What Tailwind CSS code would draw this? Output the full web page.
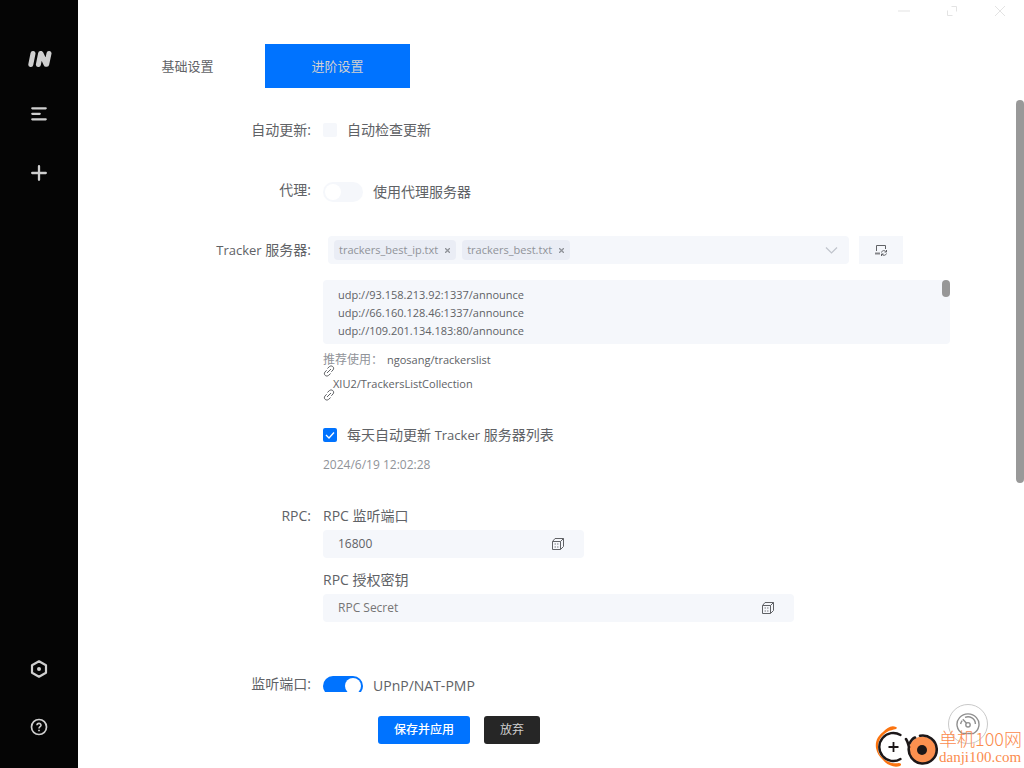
<!DOCTYPE html>
<html lang="zh-CN">
<head>
<meta charset="utf-8">
<meta name="viewport" content="width=device-width, initial-scale=1">
<title>进阶设置</title>
<script src="https://cdn.jsdelivr.net/npm/@tailwindcss/browser@4"></script>
</head>
<body class="bg-white font-['Open_Sans','Noto_Sans_CJK_SC',sans-serif] text-sm text-[#606266]">
<div class="flex h-screen overflow-hidden">
  <aside class="flex w-[78px] shrink-0 flex-col items-center justify-between bg-[#050505] pt-12 pb-7 text-[#cfcfcf]">
    <nav class="flex flex-col items-center gap-9" aria-label="任务">
      <a href="#" aria-label="首页" class="block pl-[2px]">
        <svg class="h-[22px] w-6" viewBox="0 0 24 22" fill="none" stroke="currentColor" stroke-width="5" stroke-linecap="round" stroke-linejoin="round"><path d="M5 5.500 2.800 16.500M12.600 5.500 10.400 16.500M13 5.500 18 16.200M21 5.500 18.700 16.300" /></svg>
      </a>
      <button type="button" aria-label="任务列表"><svg class="block size-4" viewBox="0 0 16 16" fill="none" stroke="currentColor" stroke-width="2.300" stroke-linecap="round"><path d="M1.300 2.300h13.400M1.300 7.800h7.400M1.300 13.300h13.400"/></svg></button>
      <button type="button" aria-label="新建任务" class="pt-[7px]"><svg class="block size-4" viewBox="0 0 16 16" fill="none" stroke="currentColor" stroke-width="2.300" stroke-linecap="round"><path d="M8 1.200v13.600M1.200 8h13.600"/></svg></button>
    </nav>
    <nav class="flex flex-col items-center gap-10" aria-label="设置与帮助">
      <button type="button" aria-label="设置"><svg class="block size-[18px]" viewBox="0 0 18 18" fill="none" stroke="currentColor" stroke-width="2.200"><path d="M9 1.300 16 5.200v7.600L9 16.700 2 12.800V5.200z" stroke-linejoin="round"/><circle cx="9" cy="9" r="2" fill="currentColor" stroke="none"/></svg></button>
      <button type="button" aria-label="帮助" class="pb-1"><svg class="block size-[18px]" viewBox="0 0 18 18" fill="none" stroke="currentColor" stroke-width="1.700"><circle cx="9" cy="9" r="7.500"/><path d="M7 7.300c0-2.600 4-2.600 4-.1C11 8.700 9 8.700 9 10.500" stroke-width="1.600"/><path d="M9 11.700v1.500" stroke-width="1.700"/></svg></button>
    </nav>
  </aside>

  <main class="relative flex min-w-0 flex-1 flex-col">
    <div class="absolute top-0 right-0 flex h-[22px] text-[#e3e3e3]">
      <button type="button" aria-label="最小化" class="grid w-12 place-items-center"><svg class="size-3" viewBox="0 0 12 12" stroke="currentColor"><path d="M0 6h12"/></svg></button>
      <button type="button" aria-label="最大化" class="grid w-12 place-items-center"><svg class="size-3" viewBox="0 0 12 12" fill="none" stroke="currentColor"><path d="M5.500 1.500h5v5M1.500 5.500v5h5"/></svg></button>
      <button type="button" aria-label="关闭" class="grid w-12 place-items-center"><svg class="size-3" viewBox="0 0 12 12" fill="none" stroke="currentColor"><path d="m1 1 10 10M11 1 1 11"/></svg></button>
    </div>

    <nav class="flex gap-[5px] pt-11 pl-[37px] text-[13px]" aria-label="设置分类">
      <a href="#" class="flex h-11 w-[145px] items-center justify-center">基础设置</a>
      <a href="#" aria-current="page" class="flex h-11 w-[145px] items-center justify-center bg-[#0073ff] text-[#d0d0d0]">进阶设置</a>
    </nav>

    <form id="settings" class="flex min-h-0 flex-1 flex-col gap-8 overflow-hidden pt-7 pr-[74px]">
      <div class="grid shrink-0 grid-cols-[233px_1fr] gap-x-3 leading-7">
        <div class="text-right">自动更新:</div>
        <label class="flex items-center gap-[10px]"><input type="checkbox" class="size-[14px] appearance-none rounded-xs bg-[#f5f7fb]">自动检查更新</label>
      </div>

      <div class="grid shrink-0 grid-cols-[233px_1fr] gap-x-3 leading-7">
        <div class="text-right">代理:</div>
        <label class="flex items-center gap-[10px] pt-1 leading-6"><input type="checkbox" role="switch" class="h-5 w-10 appearance-none rounded-full bg-[#f5f7fb] before:m-0.5 before:block before:size-4 before:rounded-full before:bg-white">使用代理服务器</label>
      </div>

      <div class="grid shrink-0 grid-cols-[233px_1fr] gap-x-3 leading-7">
        <label for="sources" class="text-right"><span class="text-[13px]">Tracker</span> 服务器:</label>
        <div>
          <div class="flex gap-[10px] pr-[47px] pl-[5px]">
            <div class="flex h-7 min-w-0 flex-1 items-center gap-[6px] rounded bg-[#f5f7fb] px-[6px] text-[11px] text-[#909399]">
              <span class="flex h-5 items-center gap-[5px] rounded bg-[#eaedf5] px-[5px]">trackers_best_ip.txt<button type="button" aria-label="移除 trackers_best_ip.txt" class="grid w-2 place-items-center"><svg class="size-[5px]" viewBox="0 0 5 5" stroke="currentColor" stroke-width="1.300"><path d="m0 0 5 5M5 0 0 5"/></svg></button></span>
              <span class="flex h-5 items-center gap-[5px] rounded bg-[#eaedf5] px-[5px]">trackers_best.txt<button type="button" aria-label="移除 trackers_best.txt" class="grid w-2 place-items-center"><svg class="size-[5px]" viewBox="0 0 5 5" stroke="currentColor" stroke-width="1.300"><path d="m0 0 5 5M5 0 0 5"/></svg></button></span>
              <input id="sources" type="text" role="combobox" aria-expanded="false" class="min-w-0 flex-1 bg-transparent outline-none">
              <button type="button" aria-label="展开" class="px-[5px]"><svg class="block h-3 w-[13px]" viewBox="0 0 13 12" fill="none" stroke="#c0c4cc" stroke-width="1.200"><path d="m1 3.500 5.500 5.500L12 3.500"/></svg></button>
            </div>
            <button type="button" aria-label="同步 Tracker" class="grid h-7 w-11 place-items-center bg-[#f5f7fb]"><svg class="size-3" viewBox="0 0 12 12" fill="none" stroke="currentColor"><path d="M1.500 7V1.500h9V5"/><path d="M0 9.500h5" stroke-width="2" stroke-opacity=".75"/><path d="M6.500 8.500c.5-2.300 3.400-2.500 4.500-.8M11.500 6v2h-2M11.500 9.500c-.7 2.200-3.500 2.300-4.500.8M6.500 12v-2h2"/></svg></button>
          </div>
          <div class="relative mt-4 h-16">
            <textarea aria-label="Tracker 服务器列表" class="block size-full resize-none overflow-hidden rounded bg-[#f5f7fb] px-[15px] py-[6px] text-[11px] leading-[18px] outline-none">udp://93.158.213.92:1337/announce
udp://66.160.128.46:1337/announce
udp://109.201.134.183:80/announce</textarea>
            <div class="absolute top-0 right-0 h-[17px] w-2 rounded-full bg-[#979797]"></div>
          </div>
          <div class="pt-1 text-[11px] leading-6">
            <div class="relative flex gap-1"><span class="text-xs leading-6 text-[#909399]">推荐使用：</span><a href="#">ngosang/trackerslist
              <svg class="absolute top-[17px] left-0 size-3" viewBox="0 0 12 12" fill="none" stroke="currentColor" stroke-linecap="round"><path d="M4.700 3.200 6.300 1.700c2.200-2.100 5.700.6 3.800 3.200L8.600 6.500M7.300 8.800 5.700 10.300C3.500 12.400 0 9.700 1.900 7.100L3.400 5.500M4.300 7.700l3.400-3.400"/></svg></a></div>
            <div class="relative pl-[10px]"><a href="#">XIU2/TrackersListCollection
              <svg class="absolute top-[17px] left-0 size-3" viewBox="0 0 12 12" fill="none" stroke="currentColor" stroke-linecap="round"><path d="M4.700 3.200 6.300 1.700c2.200-2.100 5.700.6 3.800 3.200L8.600 6.500M7.300 8.800 5.700 10.300C3.500 12.400 0 9.700 1.900 7.100L3.400 5.500M4.300 7.700l3.400-3.400"/></svg></a></div>
          </div>
          <label class="mt-[25px] flex items-center gap-[10px]">
            <span class="relative block size-[14px]"><input type="checkbox" checked class="block size-[14px] appearance-none rounded-xs bg-[#0073ff]"><svg class="pointer-events-none absolute inset-0" viewBox="0 0 14 14" fill="none" stroke="#fff" stroke-width="1.300"><path d="m3 7 3 3 5-5.500"/></svg></span>
            <span>每天自动更新 <span class="text-[13px]">Tracker</span> 服务器列表</span></label>
          <div class="mt-1 h-[17px] text-xs leading-6 text-[#909399]">2024/6/19 12:02:28</div>
        </div>
      </div>

      <div class="grid shrink-0 grid-cols-[233px_1fr] gap-x-3 pb-4 leading-7">
        <div class="text-right">RPC:</div>
        <div>
          <label for="port" class="block">RPC 监听端口</label>
          <div class="flex h-7 w-[261px] items-center rounded bg-[#f5f7fb] pr-5 pl-[15px] text-xs">
            <input id="port" type="text" value="16800" class="min-w-0 flex-1 bg-transparent outline-none">
            <button type="button" aria-label="随机端口"><svg class="block size-3" viewBox="0 0 12 12" fill="none" stroke="currentColor"><path d="M.5 3.500h8v8h-8zM.5 3.500l2.500-3h8.500l-3 3M11.500.5v8l-3 3"/><path d="M2.500 6h1.500m1 0h1.500M2.500 9h1.500m1 0h1.500" stroke-width="1.800" stroke-opacity=".4"/></svg></button>
          </div>
          <label for="secret" class="mt-2 block">RPC 授权密钥</label>
          <div class="flex h-7 w-[471px] items-center rounded bg-[#f5f7fb] pr-5 pl-[15px] text-xs">
            <input id="secret" type="text" placeholder="RPC Secret" class="min-w-0 flex-1 bg-transparent outline-none placeholder:text-[#757575]">
            <button type="button" aria-label="随机密钥"><svg class="block size-3" viewBox="0 0 12 12" fill="none" stroke="currentColor"><path d="M.5 3.500h8v8h-8zM.5 3.500l2.500-3h8.500l-3 3M11.500.5v8l-3 3"/><path d="M2.500 6h1.500m1 0h1.500M2.500 9h1.500m1 0h1.500" stroke-width="1.800" stroke-opacity=".4"/></svg></button>
          </div>
        </div>
      </div>

      <div class="grid shrink-0 grid-cols-[233px_1fr] gap-x-3 leading-7">
        <div class="text-right">监听端口:</div>
        <label class="flex items-center gap-[10px] pt-1 leading-6"><input type="checkbox" role="switch" checked class="flex h-5 w-10 appearance-none justify-end rounded-full bg-[#0073ff] before:m-0.5 before:block before:size-4 before:rounded-full before:bg-white">UPnP/NAT-PMP</label>
      </div>
    </form>

    <footer class="flex h-[76px] shrink-0 items-center gap-[14px] pl-[300px] text-xs">
      <button type="submit" form="settings" class="h-7 w-[92px] rounded-[3px] bg-[#0073ff] font-medium text-white">保存并应用</button>
      <button type="reset" form="settings" class="h-7 w-14 rounded-[3px] bg-[#262626] text-[#cfcfcf]">放弃</button>
    </footer>

    <div class="absolute top-[100px] right-0 h-[383px] w-2 rounded-full bg-[#999]"></div>

    <button type="button" aria-label="速度" class="absolute right-9 bottom-6 grid size-10 place-items-center rounded-full border border-[#c9c9c9] bg-white text-[#8f8f8f]">
      <svg class="size-6" viewBox="0 0 24 24" fill="none" stroke="currentColor" stroke-width="1.400"><path d="M6.500 21.500a11 10.500 0 1 1 11 0z" stroke-linejoin="round"/><path d="M4.600 12a7.400 7.400 0 0 1 1.600-3.400M9 5.400a7.400 7.400 0 0 1 10.400 6.600M6.800 7.200l3.700 4.100"/><circle cx="12" cy="12.800" r="2.200"/></svg>
    </button>

    <div class="absolute right-[2px] bottom-0 flex items-start text-[#fb8c4e]">
      <svg class="h-[42px] w-16" viewBox="0 0 64 42" fill="none">
        <path d="M21 1C16-1 12 2 8 6 3 10 0 15 1 22c1 5 3 8 7 12 4 5 11 8 17 6 2-1 1-3-1-3-7 1-12-1-16-5-4-3-5-7-5-11 0-7 4-12 9-15 3-2 6-2 9-3 1-1 1-2 0-2z" fill="#fb7410"/>
        <circle cx="18.500" cy="21" r="14" fill="#fff"/>
        <path d="M25.500 9a14 14 0 1 0 0 24" stroke="#1c1718" stroke-width="2.400" stroke-linecap="round"/>
        <path d="M18.500 16v10M13.500 21h10" stroke="#1c1718" stroke-width="1.800"/>
        <circle cx="47.500" cy="24" r="13.500" fill="#fb904f"/>
        <path d="M31 13c2 3 2 5 3 8M40 11.500c-3 1-4 3-5.500 6M45 9.800a14 14 0 1 1-11 11" stroke="#1c1718" stroke-width="2.600" stroke-linecap="round"/>
        <circle cx="47" cy="24" r="5" fill="#1c1718"/>
      </svg>
      <div class="w-[83px] whitespace-nowrap">
        <div class="font-['Noto_Sans_CJK_SC',sans-serif] text-lg leading-6 font-light">单机100网</div>
        <div class="font-['Liberation_Serif',serif] text-[15px] leading-[14px]">danji100.com</div>
      </div>
    </div>
  </main>
</div>
</body>
</html>
